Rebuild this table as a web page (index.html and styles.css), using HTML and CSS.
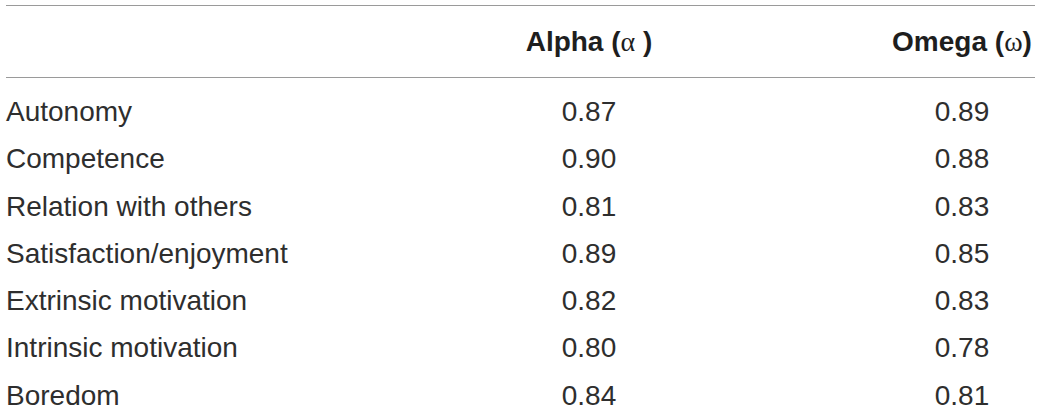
FILE: index.html
```html
<!DOCTYPE html>
<html>
<head>
<meta charset="utf-8">
<link rel="stylesheet" href="styles.css">
</head>
<body>
<table class="tbl">
  <thead>
    <tr>
      <th class="c-name"></th>
      <th class="c-alpha">Alpha (<span class="greek">α</span> )</th>
      <th class="c-omega">Omega (<span class="greek">ω</span>)</th>
    </tr>
  </thead>
  <tbody>
    <tr class="first"><td class="c-name">Autonomy</td><td class="c-alpha">0.87</td><td class="c-omega">0.89</td></tr>
    <tr><td class="c-name">Competence</td><td class="c-alpha">0.90</td><td class="c-omega">0.88</td></tr>
    <tr><td class="c-name">Relation with others</td><td class="c-alpha">0.81</td><td class="c-omega">0.83</td></tr>
    <tr><td class="c-name">Satisfaction/enjoyment</td><td class="c-alpha">0.89</td><td class="c-omega">0.85</td></tr>
    <tr><td class="c-name">Extrinsic motivation</td><td class="c-alpha">0.82</td><td class="c-omega">0.83</td></tr>
    <tr><td class="c-name">Intrinsic motivation</td><td class="c-alpha">0.80</td><td class="c-omega">0.78</td></tr>
    <tr><td class="c-name">Boredom</td><td class="c-alpha">0.84</td><td class="c-omega">0.81</td></tr>
  </tbody>
</table>
</body>
</html>
```
FILE: styles.css
```css
html, body {
  margin: 0;
  padding: 0;
  background: #ffffff;
}

.tbl {
  margin: 5px 0 0 6px;
  width: 1029px;
  border-collapse: collapse;
  table-layout: fixed;
  font-family: "Liberation Sans", Arial, sans-serif;
  font-size: 28px;
  color: #2e2e2e;
}

.tbl th,
.tbl td {
  padding: 0;
  white-space: nowrap;
}

.tbl thead tr {
  border-top: 1px solid #9a9a9a;
  border-bottom: 1px solid #9a9a9a;
}

.tbl th {
  height: 71px;
  line-height: 71px;
  font-weight: bold;
  color: #1e1e1e;
}

.greek {
  font-family: "Liberation Serif", "DejaVu Serif", serif;
  font-weight: normal;
}

.tbl td {
  height: 47.3px;
  line-height: 47.3px;
}

.tbl tbody tr.first td {
  padding-top: 10px;
}

.c-name {
  width: 283px;
  text-align: left;
}

.c-alpha {
  width: 600px;
  text-align: center;
}

.c-omega {
  width: 146px;
  text-align: center;
}
```
